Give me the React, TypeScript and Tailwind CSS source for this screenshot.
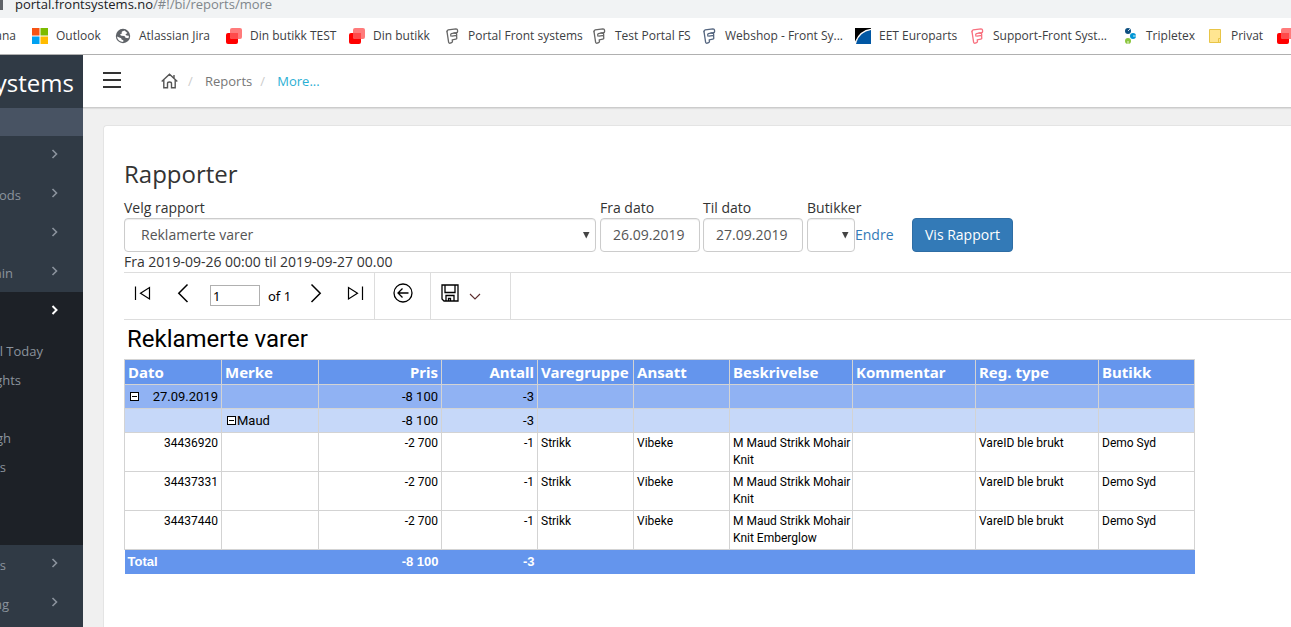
import type { ReactNode } from "react";
import clsx from "clsx";

function FrontIcon({ className }: { className: string }) {
  return (
    <svg viewBox="0 0 14 16" className={clsx("h-4 w-[14px]", className)} fill="none" stroke="currentColor" strokeWidth="1.3" strokeLinejoin="round" strokeLinecap="round">
      <path d="M1 3.600Q.8 2.200 2.200 1.800L10 .8Q11.400 .8 11.500 2L11.600 3.600Q11.500 4.600 10.400 4.700L5.400 5.600Q4.600 5.800 4.700 6.800L5 8" />
      <path d="M1 3.600L2.600 14.200Q3 15.400 4.200 15.200L5.600 14.600Q6.600 14.200 6.400 13L6.200 11.800L9.800 11.200Q10.900 11 10.800 10L10.600 8.400Q10.400 7.400 9.200 7.600L6 8.200" />
      <path d="M8 4.900L10.600 5.600L10.700 7.800" />
    </svg>
  );
}

function RedIcon() {
  return (
    <svg viewBox="0 0 16 16" className="h-4 w-4">
      <rect x="0" y="5" width="12" height="11" rx="2" fill="#ff0000" />
      <rect x="4" y="0" width="12" height="11" rx="2" fill="#ff7b7b" />
      <path d="M4 5h8v6H6a2 2 0 0 1-2-2z" fill="#ff4a4a" />
    </svg>
  );
}

function OutlookIcon() {
  return (
    <svg viewBox="0 0 16 16" className="h-4 w-4">
      <path d="M0 0h7.5v7.5H0z" fill="#f65314" />
      <path d="M8.5 0H16v7.5H8.5z" fill="#7cbb00" />
      <path d="M0 8.5h7.5V16H0z" fill="#00a1f1" />
      <path d="M8.5 8.5H16V16H8.5z" fill="#ffbb00" />
    </svg>
  );
}

function GlobeIcon() {
  return (
    <svg viewBox="0 0 16 16" className="h-4 w-4">
      <circle cx="8" cy="8" r="7.2" fill="#5f6368" />
      <path d="M9.500 2.400L7 3.600Q6 4.600 7.200 5.200L5.200 6.200Q5.200 7.600 6.600 7.800L9.200 8Q10.600 8.400 10.400 9.800L13.400 10.200Q14 9 13.800 7.800L11.600 7.600 10.400 6.400 12.400 5z" fill="#fff" />
      <path d="M1.900 8.400L5 9.800Q6.600 10 6.600 11.400L8.400 12.200 8.200 13.900Q3 13.800 1.900 8.400z" fill="#fff" />
    </svg>
  );
}

function EetIcon() {
  return (
    <svg viewBox="0 0 16 16" className="h-4 w-4">
      <path d="M0 0h16v2C9 3 4 7 1 14H0z" fill="#000" />
      <path d="M16 1.5V16H1C3 8 8 3 16 1.5z" fill="#0057a4" />
      <path d="M0 15C3 7 8 2.5 16 1.4" fill="none" stroke="#fff" strokeWidth="1.2" />
    </svg>
  );
}

function TripletexIcon() {
  return (
    <svg viewBox="0 0 14 16" className="h-4 w-[14px]">
      <circle cx="4" cy="3" r="3" fill="#0d4f80" />
      <circle cx="9" cy="8" r="3" fill="#0096d6" />
      <circle cx="4" cy="13" r="3" fill="#8cc63f" />
      <path d="M4 3l2-2M9 8h3M4 13v3" stroke="#fff" strokeWidth=".8" />
    </svg>
  );
}

function FolderIcon() {
  return (
    <svg viewBox="0 0 14 16" className="h-4 w-[14px]">
      <path d="M.5 1.5h11v13H.5z" fill="#ffe591" stroke="#e8c547" />
      <path d="M9.500 10.500h2v4h-2z" fill="#ffe591" stroke="#e8c547" />
    </svg>
  );
}

const bookmarks: { label: string; icon: ReactNode; width: string }[] = [
  { label: "Outlook", icon: <OutlookIcon />, width: "w-[83px]" },
  { label: "Atlassian Jira", icon: <GlobeIcon />, width: "w-[111px]" },
  { label: "Din butikk TEST", icon: <RedIcon />, width: "w-[123px]" },
  { label: "Din butikk", icon: <RedIcon />, width: "w-[97px]" },
  { label: "Portal Front systems", icon: <FrontIcon className="text-[#666666]" />, width: "w-[147px]" },
  { label: "Test Portal FS", icon: <FrontIcon className="text-[#666666]" />, width: "w-[110px]" },
  { label: "Webshop - Front Sy...", icon: <FrontIcon className="text-[#54657f]" />, width: "w-[152px]" },
  { label: "EET Europarts", icon: <EetIcon />, width: "w-[116px]" },
  { label: "Support-Front Syst...", icon: <FrontIcon className="text-[#f8707f]" />, width: "w-[153px]" },
  { label: "Tripletex", icon: <TripletexIcon />, width: "w-[85px]" },
  { label: "Privat", icon: <FolderIcon />, width: "w-[68px]" },
  { label: "", icon: <RedIcon />, width: "w-[16px]" },
];

function BrowserBar() {
  return (
    <div className="font-['Open_Sans',sans-serif]">
      <div className="flex h-[18px] items-end overflow-hidden bg-[#f1f3f4]">
        <span className="mb-2 h-3 w-[3px] bg-[#5f6368]" />
        <span className="ml-3 whitespace-nowrap text-[13px] leading-[28px] text-[#202124]">
          portal.frontsystems.no<span className="text-[#80868b]">/#!/bi/reports/more</span>
        </span>
      </div>
      <nav className="flex h-[37px] items-center overflow-hidden border-b border-[#b0b0b0] bg-white text-[12px] text-[#3c4043]">
        <a href="#asana" className="flex w-8 shrink-0">
          <span className="flex w-4 justify-end">ana</span>
        </a>
        {bookmarks.map((b, i) => (
          <a key={i} href="#bookmark" className={clsx("flex shrink-0 items-center gap-2 whitespace-nowrap", b.width)}>
            <span className="shrink-0">{b.icon}</span>
            {b.label}
          </a>
        ))}
      </nav>
    </div>
  );
}

function Chevron({ active }: { active?: boolean }) {
  return (
    <svg viewBox="0 0 8 10" className={clsx("mt-[13px] h-[10px] w-2", active ? "text-white" : "text-[#8b939d]")} fill="none" stroke="currentColor" strokeWidth={active ? 2 : 1.6}>
      <path d="M1.500 1L5.500 5L1.500 9" />
    </svg>
  );
}

// the menu is scrolled sideways, only the tail of each label is in view
function MenuItem({ label, width, active }: { label: string; width: string; active?: boolean }) {
  return (
    <button type="button" className="flex h-[39px] w-full items-start justify-between pr-6">
      <span className={clsx("flex justify-end whitespace-nowrap leading-[40px]", width)}>{label}</span>
      <Chevron active={active} />
    </button>
  );
}

const subItems = [
  { label: "l Today", width: "w-[43px]" },
  { label: "ghts", width: "w-[21px]" },
  { label: "", width: "w-0" },
  { label: "gh", width: "w-[11px]" },
  { label: "s", width: "w-[6px]" },
  { label: "", width: "w-0" },
  { label: "", width: "w-0" },
];

function Sidebar() {
  return (
    <aside className="w-[83px] shrink-0 overflow-hidden bg-[#303a45] text-[13px] text-[#8b939d]">
      <div className="flex h-[53px] items-center justify-end pr-[9px] pt-[2px] text-[24px] text-white">ystems</div>
      <div className="h-7 bg-[#485363]" />
      <MenuItem label="" width="w-0" />
      <MenuItem label="ods" width="w-[21px]" />
      <MenuItem label="" width="w-0" />
      <MenuItem label="ain" width="w-[13px]" />
      <div className="bg-[#1d2127] pb-[5px]">
        <MenuItem label="" width="w-0" active />
        <ul className="pt-[6px]">
          {subItems.map((s, i) => (
            <li key={i} className={clsx("flex h-[29px] items-center justify-end whitespace-nowrap", s.width)}>
              {s.label}
            </li>
          ))}
        </ul>
      </div>
      <MenuItem label="s" width="w-[6px]" />
      <MenuItem label="ng" width="w-[9px]" />
    </aside>
  );
}

function Header() {
  return (
    <header className="flex h-[53px] items-center border-b border-[#cccccc] bg-white pl-5 shadow-[0_1px_1px_rgba(0,0,0,0.08)]">
      <button type="button" aria-label="Menu" className="flex h-[18px] w-[18px] flex-col gap-[5px]">
        <span className="h-[2px] w-full bg-[#333]" />
        <span className="h-[2px] w-full bg-[#333]" />
        <span className="h-[2px] w-full bg-[#333]" />
      </button>
      <nav className="ml-10 flex items-center text-[13px] leading-[22px] text-[#777777]">
        <a href="#home" aria-label="Home">
          <svg viewBox="0 0 17 16" className="h-4 w-[17px] text-[#555]" fill="none" stroke="currentColor" strokeWidth="1.4">
            <path d="M.7 8.500L8.500 1.200L16.300 8.500M13 5.200V2M2.800 7V14.800H6.500V10.500Q6.500 9 8.500 9T10.500 10.500V14.800H14.200V7" />
          </svg>
        </a>
        <span className="ml-2.5 w-[17px] text-[#cccccc]">/</span>
        <a href="#reports">Reports</a>
        <span className="ml-2 w-[17px] text-[#cccccc]">/</span>
        <a href="#more" className="text-[#2ab0d4]">More...</a>
      </nav>
    </header>
  );
}

function SelectArrow({ className }: { className: string }) {
  return (
    <svg viewBox="0 0 7 7" className={clsx("pointer-events-none absolute top-[14px] h-[7px] w-[7px]", className)}>
      <path d="M0 0h6.500L3.250 6.500z" fill="#444" />
    </svg>
  );
}

const field = "h-[34px] rounded border border-[#cccccc] bg-white text-[14px] text-[#555555] shadow-[inset_0_1px_1px_rgba(0,0,0,0.075)]";

function ReportForm() {
  return (
    <form className="flex items-end whitespace-nowrap text-[14px] leading-5" onSubmit={(e) => e.preventDefault()}>
      <div className="mr-1 w-[472px]">
        <label htmlFor="report">Velg rapport</label>
        <div className="relative">
          <select id="report" className={clsx(field, "block w-full appearance-none px-4")}>
            <option>Reklamerte varer</option>
          </select>
          <SelectArrow className="right-1.5" />
        </div>
      </div>
      <div className="mr-[3px] w-[100px]">
        <label htmlFor="from">Fra dato</label>
        <input id="from" defaultValue="26.09.2019" className={clsx(field, "block w-full px-3 pb-[2px]")} />
      </div>
      <div className="mr-1 w-[100px]">
        <label htmlFor="to">Til dato</label>
        <input id="to" defaultValue="27.09.2019" className={clsx(field, "block w-full px-3 pb-[2px]")} />
      </div>
      <div className="w-12">
        <label htmlFor="stores">Butikker</label>
        <div className="relative">
          <select id="stores" className={clsx(field, "block w-full appearance-none")}>
            <option></option>
          </select>
          <SelectArrow className="right-1.5" />
        </div>
      </div>
      <a href="#endre" className="flex h-[34px] w-[57px] items-center text-[#337ab7]">Endre</a>
      <button type="submit" className="h-[34px] rounded border border-[#2e6da4] bg-[#337ab7] px-3 text-white">
        Vis Rapport
      </button>
    </form>
  );
}

const tool = "h-5 fill-none stroke-black";

function Toolbar() {
  return (
    <div className="flex h-12 border-y border-[#dddddd] font-['Noto_Sans',sans-serif] text-[13px] text-black">
      <div className="flex w-[251px] items-start border-r border-[#dddddd] pl-2.5 pt-[10px]">
        <button type="button" aria-label="First page">
          <svg viewBox="0 0 18 20" className={clsx(tool, "w-[18px]")} strokeWidth="1.200">
            <path d="M1.500 3.500V17M15.500 4.500V16L6.500 10.200z" />
          </svg>
        </button>
        <button type="button" aria-label="Previous page" className="ml-[25px]">
          <svg viewBox="0 0 12 20" className={clsx(tool, "w-3")} strokeWidth="1.500">
            <path d="M10.500 1.500L1.800 10.200L10.500 19" />
          </svg>
        </button>
        <input aria-label="Page" defaultValue="1" className="ml-[21px] mt-[2px] h-[21px] w-[50px] border border-[#b0b0b0] px-[2px]" />
        <span className="ml-2 w-[42px] pt-[4px]">of 1</span>
        <button type="button" aria-label="Next page">
          <svg viewBox="0 0 12 20" className={clsx(tool, "w-3")} strokeWidth="1.500">
            <path d="M1.500 1.500L10.200 10.200L1.500 19" />
          </svg>
        </button>
        <button type="button" aria-label="Last page" className="ml-6">
          <svg viewBox="0 0 18 20" className={clsx(tool, "w-[18px]")} strokeWidth="1.200">
            <path d="M16.500 3.500V17M2.500 4.500V16L11.500 10.200z" />
          </svg>
        </button>
      </div>
      <div className="flex w-14 items-start justify-center border-r border-[#dddddd] pt-[10px]">
        <button type="button" aria-label="Back">
          <svg viewBox="0 0 20 20" className={clsx(tool, "w-5")} strokeWidth="1.300">
            <circle cx="10" cy="10" r="9" />
            <path d="M15.500 10H5M9.500 5.500L5 10L9.500 14.500" />
          </svg>
        </button>
      </div>
      <div className="flex w-20 items-start border-r border-[#dddddd] pl-2.5 pt-[10px]">
        <button type="button" aria-label="Export" className="flex gap-2.5">
          <svg viewBox="0 0 18 20" className={clsx(tool, "w-[18px]")} strokeWidth="1.300">
            <path d="M1 2H17V18H3L1 16zM4 2V9.500H14V2M5 18V12.500H13V18M7.500 18V15.500H9.500V18" />
          </svg>
          <svg viewBox="0 0 12 20" className="h-5 w-3 fill-none stroke-[#5c2d2d]" strokeWidth="1.100">
            <path d="M1 11L6 16L11 11" />
          </svg>
        </button>
      </div>
    </div>
  );
}

function Minus() {
  return (
    <button type="button" aria-label="Collapse" className="flex h-[9px] w-[9px] items-center justify-center border border-black bg-white">
      <span className="h-px w-[5px] bg-black" />
    </button>
  );
}

const columns = [
  { name: "Dato", width: "w-[97px]" },
  { name: "Merke", width: "w-[97px]" },
  { name: "Pris", width: "w-[123px]", right: true },
  { name: "Antall", width: "w-[96px]", right: true },
  { name: "Varegruppe", width: "w-[96px]" },
  { name: "Ansatt", width: "w-[96px]" },
  { name: "Beskrivelse", width: "w-[123px]" },
  { name: "Kommentar", width: "w-[123px]" },
  { name: "Reg. type", width: "w-[123px]" },
  { name: "Butikk", width: "w-[96px]" },
];

const rows = [
  { id: "34436920", text: "M Maud Strikk Mohair Knit" },
  { id: "34437331", text: "M Maud Strikk Mohair Knit" },
  { id: "34437440", text: "M Maud Strikk Mohair Knit Emberglow" },
];

const cell = "border border-[#d3d3d3] pl-[3px]";

function EmptyCells({ count }: { count: number }) {
  return (
    <>
      {Array.from({ length: count }, (_, i) => (
        <td key={i} className={cell} />
      ))}
    </>
  );
}

function ReportTable() {
  return (
    <table className="w-[1071px] table-fixed border-collapse font-['Roboto',sans-serif] text-[12px] leading-[17px] text-black">
      <thead>
        <tr className="h-[25px] bg-[#6495ed] font-['Noto_Sans',sans-serif] text-[15px] text-white">
          {columns.map((c) => (
            <th key={c.name} className={clsx(cell, c.width, c.right ? "pr-[3px] text-right" : "text-left")}>
              {c.name}
            </th>
          ))}
        </tr>
      </thead>
      <tbody>
        <tr className="h-6 bg-[#90b2f3] text-[13px]">
          <td className={clsx(cell, "pr-[3px]")}>
            <div className="flex items-center justify-between pl-[2px]">
              <Minus />
              27.09.2019
            </div>
          </td>
          <td className={cell} />
          <td className={clsx(cell, "pr-[3px] text-right")}>-8 100</td>
          <td className={clsx(cell, "pr-[3px] text-right")}>-3</td>
          <EmptyCells count={6} />
        </tr>
        <tr className="h-6 bg-[#c6d8f9] text-[13px]">
          <td className={cell} />
          <td className={cell}>
            <div className="flex items-center gap-px pl-[2px]">
              <Minus />
              Maud
            </div>
          </td>
          <td className={clsx(cell, "pr-[3px] text-right")}>-8 100</td>
          <td className={clsx(cell, "pr-[3px] text-right")}>-3</td>
          <EmptyCells count={6} />
        </tr>
        {rows.map((r) => (
          <tr key={r.id} className="h-[39px] align-top">
            <td className={clsx(cell, "pr-[3px] pt-[2px] text-right")}>{r.id}</td>
            <td className={cell} />
            <td className={clsx(cell, "pr-[3px] pt-[2px] text-right")}>-2 700</td>
            <td className={clsx(cell, "pr-[3px] pt-[2px] text-right")}>-1</td>
            <td className={clsx(cell, "pt-[2px]")}>Strikk</td>
            <td className={clsx(cell, "pt-[2px]")}>Vibeke</td>
            <td className={clsx(cell, "pt-[2px]")}>{r.text}</td>
            <td className={cell} />
            <td className={clsx(cell, "pt-[2px]")}>VareID ble brukt</td>
            <td className={clsx(cell, "pt-[2px]")}>Demo Syd</td>
          </tr>
        ))}
      </tbody>
      <tfoot>
        <tr className="h-6 bg-[#6495ed] font-['Liberation_Sans',sans-serif] text-[13px] font-bold text-white">
          <td className="px-[3px]" colSpan={2}>Total</td>
          <td className="px-[3px] text-right">-8 100</td>
          <td className="px-[3px] text-right">-3</td>
          <td colSpan={6} />
        </tr>
      </tfoot>
    </table>
  );
}

export default function App() {
  return (
    <div className="flex min-h-screen flex-col overflow-hidden bg-[#f0f0f0] font-['Open_Sans',sans-serif] text-[#333333]">
      <BrowserBar />
      <div className="flex grow">
        <Sidebar />
        <div className="flex min-w-0 grow flex-col">
          <Header />
          <main className="mt-[17px] ml-5 grow rounded-tl border-l border-t border-[#e4e4e4] bg-white pl-5 pt-8">
            <h1 className="mb-2 text-[24px] leading-[32px]">Rapporter</h1>
            <ReportForm />
            <p className="text-[14px] leading-5">Fra 2019-09-26 00:00 til 2019-09-27 00.00</p>
            <Toolbar />
            <h2 className="pl-[3px] font-['Roboto',sans-serif] text-[24px] leading-[39px] text-black">Reklamerte varer</h2>
            <ReportTable />
          </main>
        </div>
      </div>
    </div>
  );
}
